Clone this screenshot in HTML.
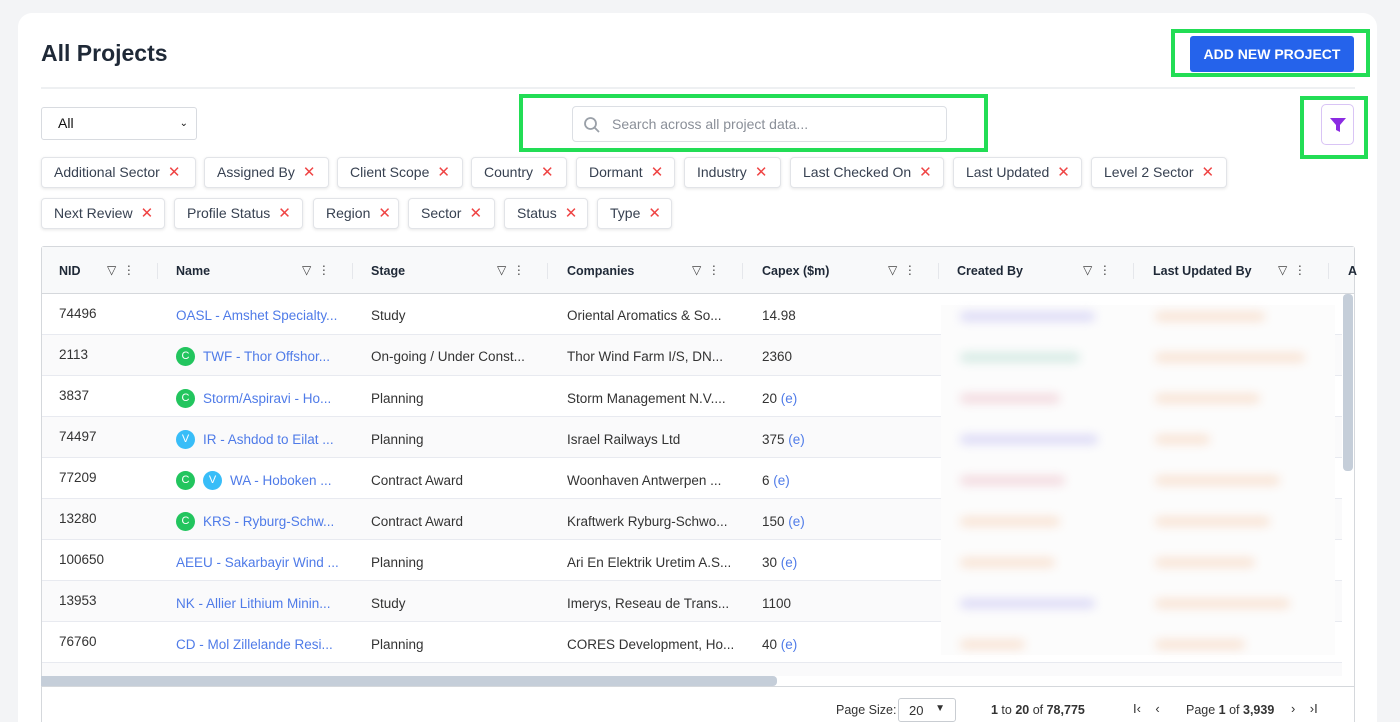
<!DOCTYPE html>
<html><head><meta charset="utf-8"><style>
*{box-sizing:border-box;margin:0;padding:0}
html,body{width:1400px;height:722px;overflow:hidden}
body{background:#f3f4f6;font-family:"Liberation Sans",sans-serif;position:relative;color:#374151}
.card{position:absolute;left:18px;top:13px;width:1359px;height:709px;background:#fff;border-radius:14px 14px 0 0}
.abs{position:absolute}
h1{position:absolute;left:41px;top:40px;font-size:23px;font-weight:bold;color:#1f2937}
.green{position:absolute;border:4px solid #22dd55}
.chip{position:absolute;height:31px;border:1px solid #e2e4e8;border-radius:4px;box-shadow:0 1px 3px rgba(0,0,0,.1);font-size:14px;color:#374151;line-height:29px;padding-left:12px;background:#fff;white-space:nowrap}
.chip b{color:#ef4444;font-weight:normal;font-size:15px;margin-left:8px}
.hd{position:absolute;top:264px;font-size:12.5px;font-weight:bold;color:#1f2937}
.ic{position:absolute;top:263px;font-size:12px;color:#444}
.sep{position:absolute;top:263px;width:1px;height:16px;background:#e5e7eb}
.row{position:absolute;left:42px;width:1300px;height:41px;border-bottom:1px solid #e8eaf0}
.c{position:absolute;font-size:13.5px;color:#333;white-space:nowrap;display:flex;align-items:center;height:18px}
.lk{color:#4f7be8}
.bd{display:inline-block;width:19px;height:19px;border-radius:50%;color:#fff;font-size:11px;text-align:center;line-height:19px;margin-right:8px;flex:none}
.g{background:#22c55e}.v{background:#38bdf8}
.blur{position:absolute;height:9px;border-radius:5px;filter:blur(5px);opacity:.5}
</style></head><body>
<div class="card"></div>
<h1>All Projects</h1>
<div class="abs" style="left:41px;top:87px;width:1314px;height:2px;background:#eef0f2"></div>
<div class="green" style="left:1171px;top:29px;width:199px;height:48px"></div>
<div class="abs" style="left:1190px;top:36px;width:164px;height:36px;background:#2563eb;border-radius:3px;color:#fff;font-size:14px;font-weight:bold;text-align:center;line-height:36px">ADD NEW PROJECT</div>
<div class="abs" style="left:41px;top:107px;width:156px;height:33px;border:1px solid #d8dbe0;border-radius:3px;font-size:14px;line-height:31px;padding-left:16px;color:#111">All<span style="position:absolute;right:8px;top:0;font-size:10px">&#8964;</span></div>
<div class="green" style="left:519px;top:94px;width:469px;height:58px"></div>
<div class="abs" style="left:572px;top:106px;width:375px;height:36px;border:1px solid #dcdfe4;border-radius:4px;font-size:14px;color:#8a8f98;line-height:34px;padding-left:39px">Search across all project data...
<svg style="position:absolute;left:10px;top:9px" width="18" height="18" viewBox="0 0 18 18"><circle cx="7.5" cy="7.5" r="5.5" fill="none" stroke="#9aa0a8" stroke-width="1.8"/><path d="M11.5 11.5L16 16" stroke="#9aa0a8" stroke-width="1.8"/></svg></div>
<div class="green" style="left:1300px;top:96px;width:68px;height:63px"></div>
<div class="abs" style="left:1321px;top:104px;width:33px;height:41px;border:1px solid #d9c4f5;border-radius:5px"><svg style="position:absolute;left:7px;top:12px" width="18" height="16" viewBox="0 0 18 16"><path d="M1 1H17L11 8V15L7 13V8Z" fill="#8b2be2"/></svg></div>

<div class="chip" style="left:41px;top:157px;width:155px">Additional Sector<b>✕</b></div>
<div class="chip" style="left:204px;top:157px;width:125px">Assigned By<b>✕</b></div>
<div class="chip" style="left:337px;top:157px;width:126px">Client Scope<b>✕</b></div>
<div class="chip" style="left:471px;top:157px;width:96px">Country<b>✕</b></div>
<div class="chip" style="left:576px;top:157px;width:99px">Dormant<b>✕</b></div>
<div class="chip" style="left:684px;top:157px;width:97px">Industry<b>✕</b></div>
<div class="chip" style="left:790px;top:157px;width:154px">Last Checked On<b>✕</b></div>
<div class="chip" style="left:953px;top:157px;width:129px">Last Updated<b>✕</b></div>
<div class="chip" style="left:1091px;top:157px;width:136px">Level 2 Sector<b>✕</b></div>
<div class="chip" style="left:41px;top:198px;width:124px">Next Review<b>✕</b></div>
<div class="chip" style="left:174px;top:198px;width:129px">Profile Status<b>✕</b></div>
<div class="chip" style="left:313px;top:198px;width:86px">Region<b>✕</b></div>
<div class="chip" style="left:408px;top:198px;width:87px">Sector<b>✕</b></div>
<div class="chip" style="left:504px;top:198px;width:84px">Status<b>✕</b></div>
<div class="chip" style="left:597px;top:198px;width:75px">Type<b>✕</b></div>

<div class="abs" style="left:41px;top:246px;width:1314px;height:490px;border:1px solid #d5d8dc;border-radius:3px"></div>
<div class="abs" style="left:42px;top:247px;width:1312px;height:47px;background:#f8f9fa;border-bottom:1px solid #d5d8dc"></div>
<div class="hd" style="left:59px">NID</div>
<div class="hd" style="left:176px">Name</div>
<div class="hd" style="left:371px">Stage</div>
<div class="hd" style="left:567px">Companies</div>
<div class="hd" style="left:762px">Capex ($m)</div>
<div class="hd" style="left:957px">Created By</div>
<div class="hd" style="left:1153px">Last Updated By</div>
<div class="hd" style="left:1348px">A</div>
<div class="ic" style="left:107px">▽ &nbsp;⋮</div><div class="sep" style="left:157px"></div>
<div class="ic" style="left:302px">▽ &nbsp;⋮</div><div class="sep" style="left:352px"></div>
<div class="ic" style="left:497px">▽ &nbsp;⋮</div><div class="sep" style="left:547px"></div>
<div class="ic" style="left:692px">▽ &nbsp;⋮</div><div class="sep" style="left:742px"></div>
<div class="ic" style="left:888px">▽ &nbsp;⋮</div><div class="sep" style="left:938px"></div>
<div class="ic" style="left:1083px">▽ &nbsp;⋮</div><div class="sep" style="left:1133px"></div>
<div class="ic" style="left:1278px">▽ &nbsp;⋮</div><div class="sep" style="left:1328px"></div>

<div class="row" style="top:294px"></div>
<div class="row" style="top:335px;background:#fafafb"></div>
<div class="row" style="top:376px"></div>
<div class="row" style="top:417px;background:#fafafb"></div>
<div class="row" style="top:458px"></div>
<div class="row" style="top:499px;background:#fafafb"></div>
<div class="row" style="top:540px"></div>
<div class="row" style="top:581px;background:#fafafb"></div>
<div class="row" style="top:622px"></div>
<div class="row" style="top:663px;background:#fafafb;height:13px;border:none"></div>

<div class="c" style="left:59px;top:304px">74496</div><div class="c lk" style="left:176px;top:306px">OASL - Amshet Specialty...</div><div class="c" style="left:371px;top:306px">Study</div><div class="c" style="left:567px;top:306px">Oriental Aromatics &amp; So...</div><div class="c" style="left:762px;top:306px">14.98</div>
<div class="c" style="left:59px;top:345px">2113</div><div class="c lk" style="left:176px;top:347px"><span class="bd g">C</span>TWF - Thor Offshor...</div><div class="c" style="left:371px;top:347px">On-going / Under Const...</div><div class="c" style="left:567px;top:347px">Thor Wind Farm I/S, DN...</div><div class="c" style="left:762px;top:347px">2360</div>
<div class="c" style="left:59px;top:386px">3837</div><div class="c lk" style="left:176px;top:389px"><span class="bd g">C</span>Storm/Aspiravi - Ho...</div><div class="c" style="left:371px;top:389px">Planning</div><div class="c" style="left:567px;top:389px">Storm Management N.V....</div><div class="c" style="left:762px;top:389px">20&nbsp;<span class="lk">(e)</span></div>
<div class="c" style="left:59px;top:427px">74497</div><div class="c lk" style="left:176px;top:430px"><span class="bd v">V</span>IR - Ashdod to Eilat ...</div><div class="c" style="left:371px;top:430px">Planning</div><div class="c" style="left:567px;top:430px">Israel Railways Ltd</div><div class="c" style="left:762px;top:430px">375&nbsp;<span class="lk">(e)</span></div>
<div class="c" style="left:59px;top:468px">77209</div><div class="c lk" style="left:176px;top:471px"><span class="bd g">C</span><span class="bd v">V</span>WA - Hoboken ...</div><div class="c" style="left:371px;top:471px">Contract Award</div><div class="c" style="left:567px;top:471px">Woonhaven Antwerpen ...</div><div class="c" style="left:762px;top:471px">6&nbsp;<span class="lk">(e)</span></div>
<div class="c" style="left:59px;top:509px">13280</div><div class="c lk" style="left:176px;top:512px"><span class="bd g">C</span>KRS - Ryburg-Schw...</div><div class="c" style="left:371px;top:512px">Contract Award</div><div class="c" style="left:567px;top:512px">Kraftwerk Ryburg-Schwo...</div><div class="c" style="left:762px;top:512px">150&nbsp;<span class="lk">(e)</span></div>
<div class="c" style="left:59px;top:550px">100650</div><div class="c lk" style="left:176px;top:553px">AEEU - Sakarbayir Wind ...</div><div class="c" style="left:371px;top:553px">Planning</div><div class="c" style="left:567px;top:553px">Ari En Elektrik Uretim A.S...</div><div class="c" style="left:762px;top:553px">30&nbsp;<span class="lk">(e)</span></div>
<div class="c" style="left:59px;top:591px">13953</div><div class="c lk" style="left:176px;top:594px">NK - Allier Lithium Minin...</div><div class="c" style="left:371px;top:594px">Study</div><div class="c" style="left:567px;top:594px">Imerys, Reseau de Trans...</div><div class="c" style="left:762px;top:594px">1100</div>
<div class="c" style="left:59px;top:632px">76760</div><div class="c lk" style="left:176px;top:635px">CD - Mol Zillelande Resi...</div><div class="c" style="left:371px;top:635px">Planning</div><div class="c" style="left:567px;top:635px">CORES Development, Ho...</div><div class="c" style="left:762px;top:635px">40&nbsp;<span class="lk">(e)</span></div>

<div class="abs" style="left:941px;top:305px;width:394px;height:350px;background:#fcfcfc"></div>
<div class="blur" style="left:960px;top:312px;width:135px;background:#b8b4f0"></div>
<div class="blur" style="left:960px;top:353px;width:120px;background:#a9d6c8"></div>
<div class="blur" style="left:960px;top:394px;width:100px;background:#e9b4bf"></div>
<div class="blur" style="left:960px;top:435px;width:138px;background:#b8b4f0"></div>
<div class="blur" style="left:960px;top:476px;width:105px;background:#e9b4bf"></div>
<div class="blur" style="left:960px;top:517px;width:100px;background:#f5c8a8"></div>
<div class="blur" style="left:960px;top:558px;width:95px;background:#f5c8a8"></div>
<div class="blur" style="left:960px;top:599px;width:135px;background:#b8b4f0"></div>
<div class="blur" style="left:960px;top:640px;width:65px;background:#f5c8a8"></div>
<div class="blur" style="left:1155px;top:312px;width:110px;background:#f5c8a8"></div>
<div class="blur" style="left:1155px;top:353px;width:150px;background:#f5c8a8"></div>
<div class="blur" style="left:1155px;top:394px;width:105px;background:#f5c8a8"></div>
<div class="blur" style="left:1155px;top:435px;width:55px;background:#f5c8a8"></div>
<div class="blur" style="left:1155px;top:476px;width:125px;background:#f5c8a8"></div>
<div class="blur" style="left:1155px;top:517px;width:115px;background:#f5c8a8"></div>
<div class="blur" style="left:1155px;top:558px;width:100px;background:#f5c8a8"></div>
<div class="blur" style="left:1155px;top:599px;width:135px;background:#f5c8a8"></div>
<div class="blur" style="left:1155px;top:640px;width:90px;background:#f5c8a8"></div>

<div class="abs" style="left:1343px;top:294px;width:10px;height:177px;background:#c5ced9;border-radius:4px"></div>
<div class="abs" style="left:41px;top:676px;width:736px;height:10px;background:#c5ced9;border-radius:0 4px 4px 0"></div>
<div class="abs" style="left:42px;top:686px;width:1312px;height:1px;background:#d5d8dc"></div>
<div class="abs" style="left:836px;top:703px;font-size:12.5px;color:#333">Page Size:</div>
<div class="abs" style="left:898px;top:698px;width:58px;height:24px;border:1px solid #c9cdd2;border-radius:3px;font-size:13px;padding:4px 0 0 10px;color:#333">20<span style="position:absolute;right:10px;top:4px;font-size:10px">▼</span></div>
<div class="abs" style="left:991px;top:703px;font-size:12.5px;color:#333"><b>1</b> to <b>20</b> of <b>78,775</b></div>
<div class="abs" style="left:1133px;top:701px;font-size:13px;color:#333">I&lsaquo; &nbsp;&nbsp; &lsaquo;</div>
<div class="abs" style="left:1186px;top:703px;font-size:12.5px;color:#333">Page <b>1</b> of <b>3,939</b></div>
<div class="abs" style="left:1291px;top:701px;font-size:13px;color:#333">&rsaquo; &nbsp;&nbsp; &rsaquo;I</div>
</body></html>
